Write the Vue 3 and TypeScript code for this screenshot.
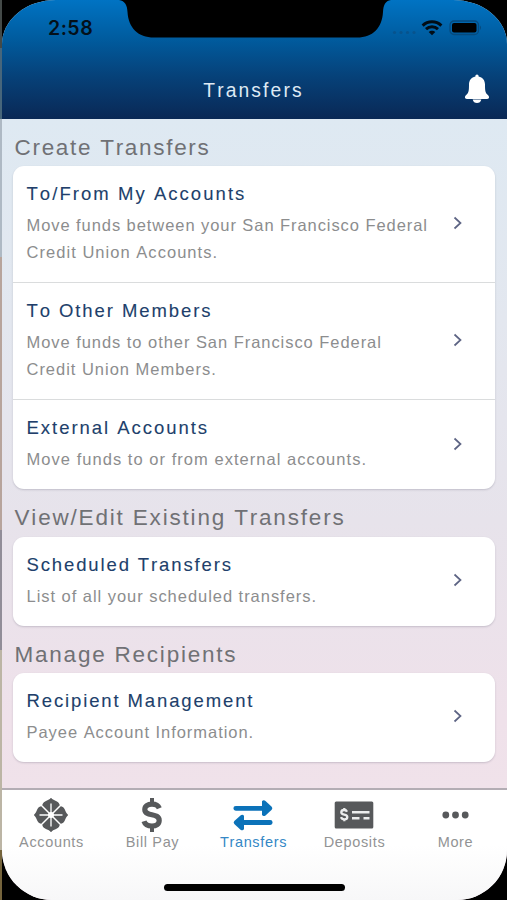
<script setup lang="ts">
interface TextLine {
  text: string
  tracking: number
}
interface Item {
  title: TextLine
  lines: TextLine[]
}
interface Section {
  heading: TextLine
  items: Item[]
}
interface Tab {
  label: string
  icon: 'accounts' | 'bill' | 'transfers' | 'deposits' | 'more'
  active?: boolean
}

const sections: Section[] = [
  {
    heading: { text: 'Create Transfers', tracking: 1.7 },
    items: [
      {
        title: { text: 'To/From My Accounts', tracking: 2.05 },
        lines: [
          { text: 'Move funds between your San Francisco Federal', tracking: 0.93 },
          { text: 'Credit Union Accounts.', tracking: 1.04 },
        ],
      },
      {
        title: { text: 'To Other Members', tracking: 1.92 },
        lines: [
          { text: 'Move funds to other San Francisco Federal', tracking: 0.95 },
          { text: 'Credit Union Members.', tracking: 0.98 },
        ],
      },
      {
        title: { text: 'External Accounts', tracking: 1.97 },
        lines: [{ text: 'Move funds to or from external accounts.', tracking: 1.04 }],
      },
    ],
  },
  {
    heading: { text: 'View/Edit Existing Transfers', tracking: 1.82 },
    items: [
      {
        title: { text: 'Scheduled Transfers', tracking: 1.88 },
        lines: [{ text: 'List of all your scheduled transfers.', tracking: 0.96 }],
      },
    ],
  },
  {
    heading: { text: 'Manage Recipients', tracking: 1.78 },
    items: [
      {
        title: { text: 'Recipient Management', tracking: 1.88 },
        lines: [{ text: 'Payee Account Information.', tracking: 0.96 }],
      },
    ],
  },
]

const tabs: Tab[] = [
  { label: 'Accounts', icon: 'accounts' },
  { label: 'Bill Pay', icon: 'bill' },
  { label: 'Transfers', icon: 'transfers', active: true },
  { label: 'Deposits', icon: 'deposits' },
  { label: 'More', icon: 'more' },
]

const spacing = (line: TextLine) => ({ letterSpacing: `${line.tracking}px` })
</script>

<template>
  <div class="stage">
    <div class="phone">
      <header class="top">
        <svg class="notch" width="280" height="38" viewBox="0 0 280 38">
          <path d="M0 0H278C272 1 270.500 5 270 12C269 28 260 37.500 244 37.500H41C25 37.500 15.500 28 14.500 12C14.200 5 12 1 6 0Z" />
        </svg>
        <div class="status">
          <span class="clock">2:58</span>
          <div class="signals">
            <svg width="25" height="5" viewBox="0 0 25 5" class="dots">
              <circle cx="2.500" cy="2.500" r="1.600" />
              <circle cx="9" cy="2.500" r="1.600" />
              <circle cx="15.500" cy="2.500" r="1.600" />
              <circle cx="22" cy="2.500" r="1.600" />
            </svg>
            <svg width="22" height="16" viewBox="0 0 22 16" class="wifi">
              <path d="M1.600 5.600C7 .6 15 .6 20.400 5.600" />
              <path d="M5 9.200C8.500 6 13.500 6 17 9.200" />
              <path class="fill" d="M11 15.200L7.700 12C9.500 10.200 12.500 10.200 14.300 12Z" />
            </svg>
            <svg width="34" height="16" viewBox="0 0 34 16" class="battery">
              <rect class="case" x="1" y="1" width="28.500" height="13.500" rx="4" />
              <rect x="3" y="3" width="24.500" height="9.500" rx="2" />
              <path class="tip" d="M31 5.500Q33 7.700 31 10Z" />
            </svg>
          </div>
        </div>
        <div class="bar">
          <h1>Transfers</h1>
          <svg class="bell" width="26" height="30" viewBox="0 0 26 30">
            <path d="M13 .5C14 .5 14.600 1.200 14.600 2.400C18.600 3.200 21 6.200 21 10.500C21 16.500 21.300 18.500 23.300 20.500C24.500 21.700 25.200 22.500 25 23.600C24.900 24.600 24.200 25 23.200 25H2.800C1.800 25 1.100 24.600 1 23.600C.8 22.500 1.500 21.700 2.700 20.500C4.700 18.500 5 16.500 5 10.500C5 6.200 7.400 3.200 11.400 2.400C11.400 1.200 12 .5 13 .5Z" />
            <path d="M8.700 25.500H17.300C16.800 27.900 15.200 29 13 29S9.200 27.900 8.700 25.500Z" />
          </svg>
        </div>
      </header>

      <main class="content">
        <section v-for="section in sections" :key="section.heading.text">
          <h2 :style="spacing(section.heading)">{{ section.heading.text }}</h2>
          <div class="card">
            <div v-for="item in section.items" :key="item.title.text" class="row">
              <div class="text">
                <h3 :style="spacing(item.title)">{{ item.title.text }}</h3>
                <p v-for="line in item.lines" :key="line.text" :style="spacing(line)">{{ line.text }}</p>
              </div>
              <svg class="chevron" width="10" height="14" viewBox="0 0 10 14">
                <path d="M1.500 1.500L7.500 7L1.500 12.500" />
              </svg>
            </div>
          </div>
        </section>
      </main>

      <nav class="tabs">
        <div class="tab-row">
          <div v-for="tab in tabs" :key="tab.label" class="tab" :class="{ active: tab.active }">
            <div class="icon">
              <svg v-if="tab.icon === 'accounts'" width="36" height="36" viewBox="-18 -18 36 36">
                <g v-for="angle in [0, 90, 180, 270]" :key="angle" :transform="`rotate(${angle})`">
                  <path d="M0 -17.200C1.500 -15.500 3.500 -14.600 5.500 -13.800C8 -12.600 9 -11 8.200 -8.800L7.500 -7.500L0 0L-7.500 -7.500L-8.200 -8.800C-9 -11 -8 -12.600 -5.500 -13.800C-3.500 -14.600 -1.500 -15.500 0 -17.200Z" />
                  <path d="M0 0L9.500 -9.500L6 -12L-6 -12L-9.500 -9.500Z" />
                </g>
                <path class="seam" d="M-11 -11L11 11M11 -11L-11 11" />
                <path class="vein" d="M0 -11.500V11.500M-11.500 0H11.500" />
                <circle class="core" r="3" />
              </svg>
              <svg v-else-if="tab.icon === 'bill'" width="22" height="36" viewBox="0 0 22 36">
                <path class="dollar" d="M18.300 11.300C17.200 8.500 14.500 7.200 11 7.200C6.500 7.200 3.800 9.200 3.800 12.400C3.800 20.200 18.200 15.200 18.200 23.400C18.200 27 15.200 29 11 29C6.800 29 4 27.400 3 24.200" />
                <path class="stem" d="M11 1V7M11 29V35" />
              </svg>
              <svg v-else-if="tab.icon === 'transfers'" width="40" height="32" viewBox="0 0 40 32">
                <path class="shaft" d="M2.800 9.300H30M10 23.500H37.200" />
                <path d="M29 2.300Q30.500 .4 32.500 2L38.700 7.700Q40 9.200 38.700 10.700L32.500 16.400Q30 17.700 29 15.700Z" />
                <path d="M11 16.800Q9.500 14.900 7.500 16.500L1.300 22Q0 23.500 1.300 25L7.500 30.700Q10 32 11 30Z" />
              </svg>
              <svg v-else-if="tab.icon === 'deposits'" width="40" height="28" viewBox="0 0 40 28">
                <rect x=".7" y=".5" width="38.600" height="27" rx="1.500" />
                <path class="light" d="M13 10.700C12.500 9.500 11.500 9 10.300 9C8.500 9 7.300 9.900 7.300 11.200C7.300 14.500 13.300 12.500 13.300 15.900C13.300 17.400 12 18.300 10.300 18.300C8.600 18.300 7.500 17.600 7 16.200M10.300 7V9M10.300 18.300V20.300" />
                <path class="rule" d="M18 11.300H35.500M18 17.200H25.500M29.500 17.200H35.500" />
              </svg>
              <svg v-else width="28" height="8" viewBox="0 0 28 8">
                <circle cx="4.800" cy="4" r="3.400" />
                <circle cx="14.500" cy="4" r="3.400" />
                <circle cx="24.200" cy="4" r="3.400" />
              </svg>
            </div>
            <span class="label">{{ tab.label }}</span>
          </div>
        </div>
        <div class="home"></div>
      </nav>
    </div>
  </div>
</template>

<style>
body {
  margin: 0;
  background: #000;
}
</style>

<style scoped>
.stage {
  display: flex;
  box-sizing: border-box;
  width: 507px;
  height: 900px;
  padding-left: 2px;
  overflow: hidden;
  font-family: 'Liberation Sans', Arial, Helvetica, sans-serif;
  font-kerning: none;
  background:
    linear-gradient(#444a48 0 48px, #47667b 48px 119px, #aeb9c4 119px 257px, #b7a49c 257px 530px, #918d98 530px 650px, #bcb5a5 650px 850px, #75643c 850px) 0 0 / 2px 100% no-repeat,
    #000;
}
h1,
h2,
h3,
p {
  margin: 0;
  font-weight: 400;
  white-space: nowrap;
}
.phone {
  display: flex;
  flex-direction: column;
  width: 505px;
  height: 900px;
  overflow: hidden;
  border-radius: 54px 54px 50px 50px / 44px 44px 50px 50px;
  background: linear-gradient(#dee9f2 119px, #e3e7ef 320px, #e7e3eb 520px, #efe1ea 720px, #f0e2ea 790px);
}
.top {
  position: relative;
  display: flex;
  flex-direction: column;
  flex: none;
  height: 119px;
  background: linear-gradient(#0073c3 0, #005c9f 38px, #06427a 75px, #0a2855 119px);
}
.notch {
  position: absolute;
  top: 0;
  left: 110.500px;
}
.status {
  display: flex;
  justify-content: space-between;
  align-items: center;
  height: 55px;
  padding: 0 24px 0 46px;
}
.clock {
  font-family: Inter, 'Liberation Sans', sans-serif;
  font-size: 19.500px;
  font-weight: 600;
  letter-spacing: 0.500px;
  color: #041019;
}
.signals {
  display: flex;
  align-items: center;
}
.dots {
  margin: 10px 4px 0 0;
  fill: #07538d;
}
.wifi {
  margin-right: 6px;
  fill: none;
  stroke: #020d16;
  stroke-width: 3;
}
.wifi .fill {
  fill: #020d16;
  stroke: none;
}
.battery .case {
  fill: none;
  stroke: #064a7d;
  stroke-width: 1.300;
}
.battery .tip {
  fill: #064a7d;
}
.bar {
  position: relative;
  display: flex;
  justify-content: center;
  align-items: center;
  height: 64px;
}
.bar h1 {
  margin: 7px 2px 0 0;
  font-size: 19.300px;
  line-height: 24px;
  letter-spacing: 2.100px;
  color: #dfeaf4;
}
.bell {
  position: absolute;
  right: 17px;
  top: 19px;
  fill: #fff;
}
.content {
  flex: 1;
  padding: 0 12px 0 11px;
}
h2 {
  box-sizing: border-box;
  height: 47.200px;
  padding: 13px 0 0 1.500px;
  font-size: 22.500px;
  line-height: 31px;
  color: #707175;
}
.card {
  overflow: hidden;
  border-radius: 11px;
  background: #fff;
  box-shadow: 0 1px 2px rgba(60, 60, 80, 0.22);
}
.row {
  display: flex;
  justify-content: space-between;
  align-items: center;
  padding: 14px 32px 16.100px 13.500px;
}
.row + .row {
  border-top: 1.500px solid #dadcdd;
}
h3 {
  margin-bottom: 5px;
  font-size: 18.500px;
  line-height: 27px;
  color: #213f6b;
  -webkit-text-stroke: 0.100px #213f6b;
}
p {
  font-size: 16.500px;
  line-height: 27px;
  color: #8c8d8e;
}
.chevron {
  flex: none;
  fill: none;
  stroke: #5d6484;
  stroke-width: 1.700;
}
.tabs {
  display: flex;
  flex-direction: column;
  align-items: center;
  flex: none;
  box-sizing: border-box;
  height: 112px;
  border-top: 2px solid #b3adb4;
  background: linear-gradient(#fff 50%, #f7f7f8);
}
.tab-row {
  display: flex;
  flex: none;
  width: 505px;
  height: 94px;
  margin-right: 2px;
}
.tab {
  display: flex;
  flex-direction: column;
  align-items: center;
  width: 20%;
  padding-top: 7px;
  color: #929394;
  fill: #57595b;
}
.icon {
  display: flex;
  justify-content: center;
  align-items: center;
  height: 36px;
  margin-right: 1px;
}
.label {
  font-size: 14.500px;
  line-height: 18px;
  letter-spacing: 0.650px;
  white-space: nowrap;
}
.active {
  color: #3588c6;
  fill: #0b72b9;
}
.seam {
  fill: none;
  stroke: #fff;
  stroke-width: 1.500;
}
.vein {
  fill: none;
  stroke: #d4d5d6;
  stroke-width: 1.800;
}
.core {
  fill: #fff;
}
.dollar,
.stem {
  fill: none;
  stroke: #57595b;
  stroke-width: 5.200;
}
.stem {
  stroke-width: 4;
}
.shaft {
  fill: none;
  stroke: #0b72b9;
  stroke-width: 4.800;
  stroke-linecap: round;
}
.light,
.rule {
  fill: none;
  stroke: #eceded;
  stroke-width: 2.300;
}
.rule {
  stroke-width: 2.600;
}
.home {
  width: 181px;
  height: 6.500px;
  border-radius: 4px;
  background: #000;
}
</style>
